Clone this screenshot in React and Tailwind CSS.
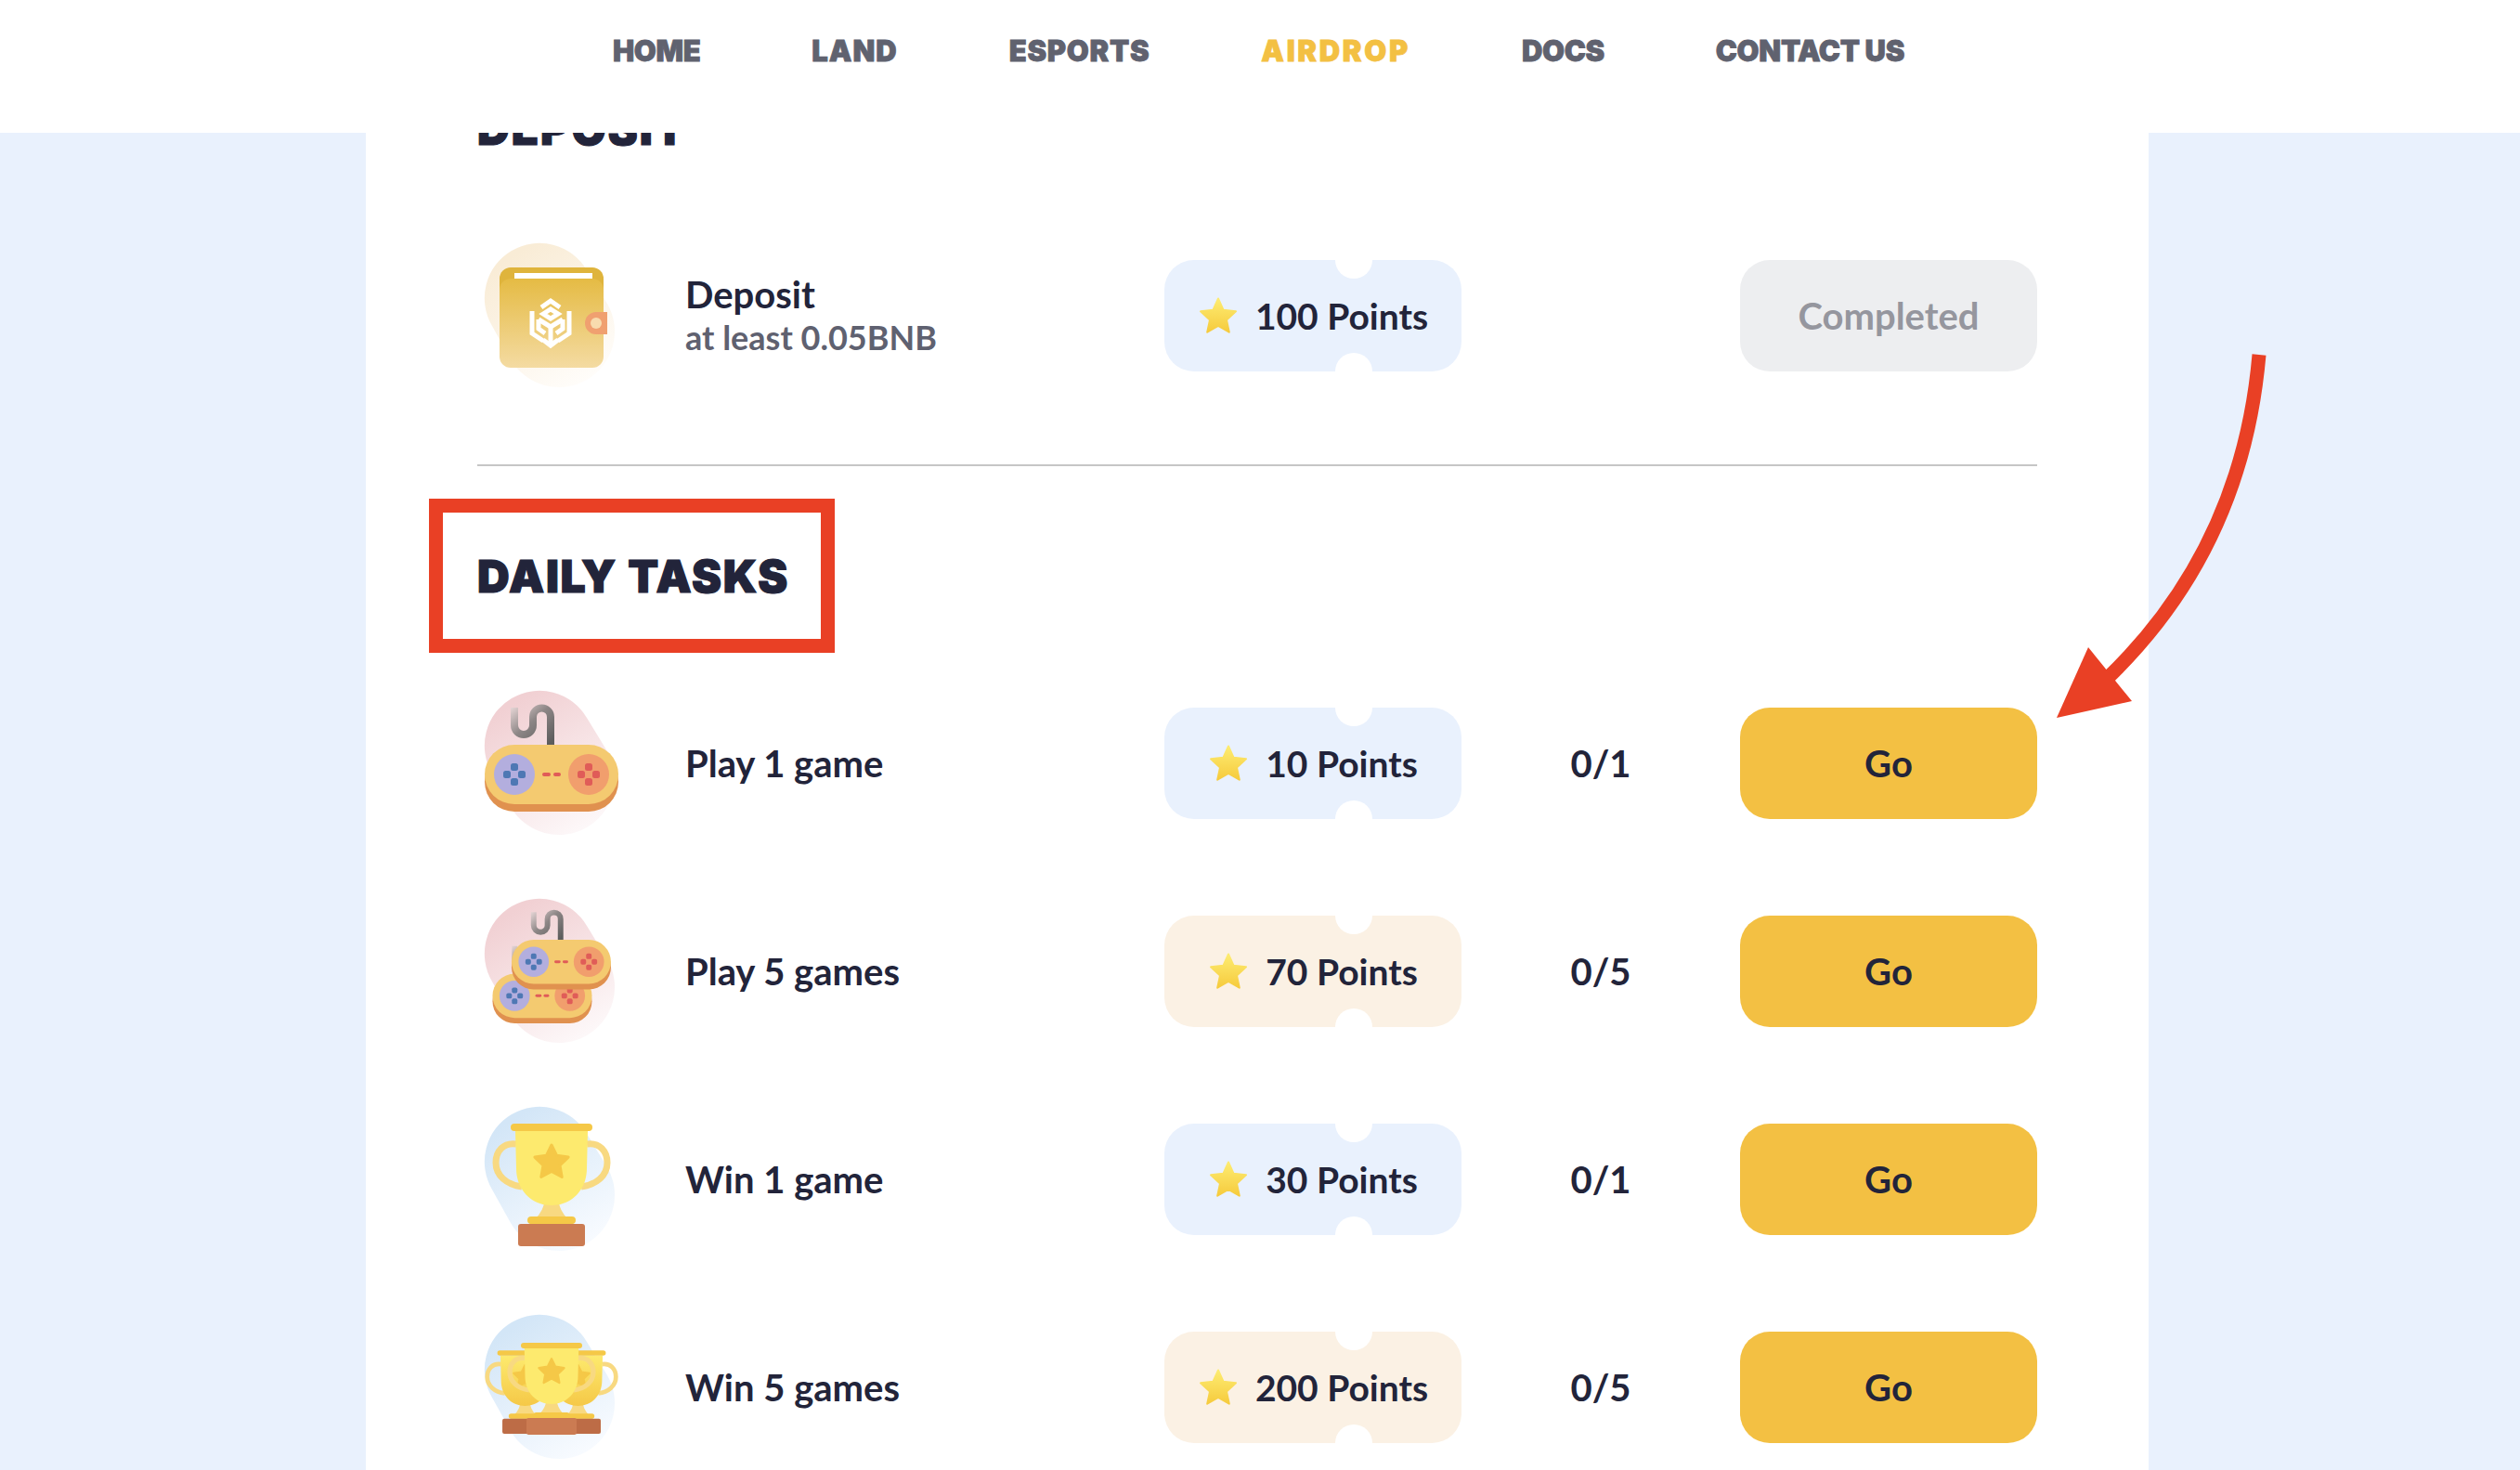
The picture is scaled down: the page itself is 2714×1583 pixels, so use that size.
const NAV = [
  { label: 'HOME', track: 'tracking-[-0.4px]' },
  { label: 'LAND', track: 'tracking-[1px]' },
  { label: 'ESPORTS', track: 'tracking-[0.7px]' },
  { label: 'AIRDROP', track: 'tracking-[2.7px]' },
  { label: 'DOCS', track: 'tracking-[-0.4px]' },
  { label: 'CONTACT US', track: 'tracking-[-0.3px]' },
];

const DAILY = [
  { title: 'Play 1 game', points: '10 Points', count: '0/1', tone: 'blue', icon: 'play1' },
  { title: 'Play 5 games', points: '70 Points', count: '0/5', tone: 'sand', icon: 'play5' },
  { title: 'Win 1 game', points: '30 Points', count: '0/1', tone: 'blue', icon: 'win1' },
  { title: 'Win 5 games', points: '200 Points', count: '0/5', tone: 'sand', icon: 'win5' },
];

// five pointed star, shared by the badge and the trophies
const starPoints = (cx, cy, R, r) =>
  Array.from({ length: 10 }, (_, i) => {
    const a = (Math.PI / 5) * i - Math.PI / 2;
    const d = i % 2 ? r : R;
    return `${(cx + d * Math.cos(a)).toFixed(1)},${(cy + d * Math.sin(a)).toFixed(1)}`;
  }).join(' ');

function Blob({ id, from, to }) {
  return (
    <>
      <defs>
        <linearGradient id={id} x1="0.2" y1="0.1" x2="0.7" y2="1">
          <stop offset="0" stopColor={from} />
          <stop offset="1" stopColor={to} />
        </linearGradient>
      </defs>
      <path d="M112 31 L134 67 A60 60 0 1 1 30 127 L10 91 A59 59 0 0 1 112 31 Z" fill={`url(#${id})`} />
    </>
  );
}

function Controller({ id, transform }) {
  return (
    <g transform={transform}>
      <defs>
        <linearGradient id={id} gradientUnits="userSpaceOnUse" x1="70" y1="60" x2="34" y2="18">
          <stop offset="0" stopColor="#5d5d5d" />
          <stop offset="0.55" stopColor="#8d8686" />
          <stop offset="1" stopColor="#e2d2d2" />
        </linearGradient>
      </defs>
      <path d="M73 62 V30 a9.5 9.5 0 0 0 -19 0 V39 a10 10 0 0 1 -20 0 V20" fill="none" stroke={`url(#${id})`} strokeWidth="8" />
      <rect x="2" y="68" width="144" height="64" rx="32" fill="#e0914f" />
      <rect x="2" y="60" width="144" height="64" rx="32" fill="#f4ca70" />
      <circle cx="34" cy="92" r="22" fill="#b3aede" />
      <circle cx="114" cy="92" r="22" fill="#f19e6d" />
      {[[34, 84], [34, 100], [26, 92], [42, 92]].map(([x, y]) => (
        <rect key={`${x}-${y}`} x={x - 4} y={y - 4} width="8" height="8" rx="2.5" fill="#4e78b4" />
      ))}
      {[[114, 84], [114, 100], [106, 92], [122, 92]].map(([x, y]) => (
        <rect key={`${x}-${y}`} x={x - 4} y={y - 4} width="8" height="8" rx="2.5" fill="#e05c58" />
      ))}
      <rect x="64" y="90" width="9" height="4" rx="2" fill="#e05c58" />
      <rect x="76" y="90" width="8" height="4" rx="2" fill="#e05c58" />
    </g>
  );
}

function Trophy({ transform, cup = '#fdea6e', base = '#cb7b52' }) {
  return (
    <g transform={transform}>
      <path d="M36 42 C22 40 14 50 14 62 C14 76 26 86 42 88" fill="none" stroke="#f8d981" strokeWidth="7" />
      <path d="M112 42 C126 40 134 50 134 62 C134 76 122 86 106 88" fill="none" stroke="#f8d981" strokeWidth="7" />
      <path d="M66 106 H82 C84 115 90 122 98 128 H50 C58 122 64 115 66 106 Z" fill="#f8d981" />
      <path d="M35 28 H113 L112 68 C112 92 95 108 74 108 C53 108 36 92 36 68 Z" fill={cup} />
      <rect x="30" y="20" width="88" height="8" rx="4" fill="#f5c847" />
      <polygon points={starPoints(74, 62, 19, 9.5)} fill="#f5c847" stroke="#f5c847" strokeWidth="3" strokeLinejoin="round" />
      <rect x="48" y="120" width="52" height="8" rx="4" fill="#f5c847" />
      <rect x="38" y="128" width="72" height="24" rx="3" fill={base} />
    </g>
  );
}

function TaskIcon({ kind }) {
  return (
    <svg viewBox="0 0 160 160" className="w-[160px] h-[160px] shrink-0">
      {kind === 'deposit' && (
        <>
          <Blob id="blob-deposit" from="#f9ecd6" to="#fffdfa" />
          <defs>
            <linearGradient id="wallet-front" x1="0" y1="0" x2="0" y2="1">
              <stop offset="0" stopColor="#e5bb44" />
              <stop offset="1" stopColor="#f4dba2" />
            </linearGradient>
          </defs>
          <rect x="18" y="28" width="112" height="60" rx="12" fill="#dfb43c" />
          <rect x="18" y="40" width="112" height="96" rx="12" fill="url(#wallet-front)" />
          <rect x="34" y="34" width="84" height="6" fill="#fff" />
          <path d="M134 76 H122 A12 12 0 0 0 122 100 H134 Z" fill="#f0a070" />
          <circle cx="122" cy="88" r="6" fill="#f8dcae" />
          <g fill="none" stroke="#fff" strokeWidth="5" strokeLinejoin="miter">
            <path d="M63 71 L73 64 L83 71" />
            <path d="M65 78 L73 73 L81 78 L73 83 Z" />
            <path d="M53 75 V99 L65 107" />
            <path d="M93 75 V99 L81 107" />
            <path d="M60 84 L73 92 L86 84" />
            <path d="M60 84 V94 L67 99" />
            <path d="M86 84 V94 L79 99" />
            <path d="M73 92 V112" />
            <path d="M65 106 L73 112 L81 106" />
          </g>
        </>
      )}
      {kind === 'play1' && (
        <>
          <Blob id="blob-play1" from="#f1d0d3" to="#fdf8f9" />
          <Controller id="cable-play1" />
        </>
      )}
      {kind === 'play5' && (
        <>
          <Blob id="blob-play5" from="#f1d0d3" to="#fdf8f9" />
          <Controller id="cable-play5b" transform="translate(9 38) scale(0.743)" />
          <Controller id="cable-play5a" transform="translate(29.5 1.4) scale(0.743)" />
        </>
      )}
      {kind === 'win1' && (
        <>
          <Blob id="blob-win1" from="#d3e6f7" to="#f8fbff" />
          <Trophy />
        </>
      )}
      {kind === 'win5' && (
        <>
          <Blob id="blob-win5" from="#d3e6f7" to="#f8fbff" />
          <defs>
            <linearGradient id="cup-side" x1="0" y1="0" x2="0" y2="1">
              <stop offset="0" stopColor="#fdea6e" />
              <stop offset="1" stopColor="#f5c847" />
            </linearGradient>
          </defs>
          <Trophy transform="translate(-4.8 26.6) scale(0.68)" cup="url(#cup-side)" base="#bd6c46" />
          <Trophy transform="translate(52.2 26.6) scale(0.68)" cup="url(#cup-side)" base="#bd6c46" />
          <Trophy transform="translate(18.5 17) scale(0.75)" />
        </>
      )}
    </svg>
  );
}

function PointsBadge({ label, tone, id }) {
  return (
    <div className={`relative h-[120px] rounded-[32px] overflow-hidden flex items-center justify-center gap-[18px] text-[39px] ${tone === 'sand' ? 'bg-[#fbf1e4]' : 'bg-[#e9f1fd]'}`}>
      <span className="absolute left-[184px] -top-[20px] w-[40px] h-[40px] rounded-full bg-white" />
      <span className="absolute left-[184px] -bottom-[20px] w-[40px] h-[40px] rounded-full bg-white" />
      <svg viewBox="0 0 44 44" className="w-[44px] h-[44px] shrink-0">
        <defs>
          <linearGradient id={id} x1="0" y1="0" x2="0" y2="1">
            <stop offset="0" stopColor="#fdec72" />
            <stop offset="1" stopColor="#f6cb3d" />
          </linearGradient>
        </defs>
        <polygon points={starPoints(22, 23.5, 20, 9.5)} fill={`url(#${id})`} stroke={`url(#${id})`} strokeWidth="2" strokeLinejoin="round" />
      </svg>
      <span>{label}</span>
    </div>
  );
}

function TaskRow({ title, sub, points, count, tone, icon, done }) {
  return (
    <div className="grid grid-cols-[740px_320px_300px_320px] grid-rows-[120px] items-center h-[120px]">
      <div className="flex items-center pl-[6px]">
        <div className="w-[218px] shrink-0">
          <TaskIcon kind={icon} />
        </div>
        <div>
          <div className="leading-[46px]">{title}</div>
          {sub && <div className="text-[36px] leading-[46px] text-[#5f6170]">{sub}</div>}
        </div>
      </div>
      <PointsBadge label={points} tone={tone} id={`star-${icon}`} />
      <div className="text-center">{count}</div>
      <button
        className={`h-[120px] rounded-[32px] ${done ? 'bg-[#edeef0] text-[#95969e]' : 'bg-[#f3c043] text-[#22243a]'}`}
      >
        {done ? 'Completed' : 'Go'}
      </button>
    </div>
  );
}

export default function App() {
  return (
    <div className="relative h-[1583px] overflow-hidden bg-[#e9f1fd] pr-[6px] font-['Lato',sans-serif] font-bold text-[40px] text-[#22243a]">
      {/* top bar sits over the scrolled card */}
      <header className="absolute top-0 inset-x-0 z-10 h-[143px] bg-white">
        <nav className="flex justify-center gap-[120px] pt-[34px] pr-[3px] font-['Inter',sans-serif] font-black text-[31px] leading-[42px] text-[#60626f] [-webkit-text-stroke:0.8px_currentColor]">
          {NAV.map((item) => (
            <a key={item.label} href="#" className={`${item.track} ${item.label === 'AIRDROP' ? 'text-[#f3c043]' : ''}`}>
              {item.label}
            </a>
          ))}
        </nav>
      </header>

      <main className="mx-auto w-[1920px] h-full bg-white px-[120px] pt-[109px]">
        <h2 className="h-[60px] leading-[60px] mb-[111px] font-['Inter',sans-serif] font-black text-[48px] tracking-[2px] [-webkit-text-stroke:1.2px_currentColor]">DEPOSIT</h2>
        <TaskRow title="Deposit" sub="at least 0.05BNB" points="100 Points" tone="blue" icon="deposit" done />

        <div className="mt-[100px] h-[2px] bg-[#c6c6c6]" />

        <div className="relative mt-[89px] mb-[111px]">
          <h2 className="h-[60px] leading-[60px] font-['Inter',sans-serif] font-black text-[48px] tracking-[1.7px] [-webkit-text-stroke:1.2px_currentColor]">DAILY TASKS</h2>
          {/* annotation box */}
          <div className="absolute -left-[52px] -top-[54px] w-[437px] h-[166px] border-[15px] border-[#e94025]" />
        </div>

        <div className="flex flex-col gap-[104px]">
          {DAILY.map((task) => (
            <TaskRow key={task.title} {...task} />
          ))}
        </div>
      </main>

      {/* annotation arrow */}
      <svg className="absolute left-[2200px] top-[370px] w-[250px] h-[420px]" viewBox="2200 370 250 420">
        <path d="M2433 382 Q2415 590 2270 730" fill="none" stroke="#e94025" strokeWidth="15" />
        <polygon points="2249,697 2215,773 2296,755" fill="#e94025" />
      </svg>
    </div>
  );
}
